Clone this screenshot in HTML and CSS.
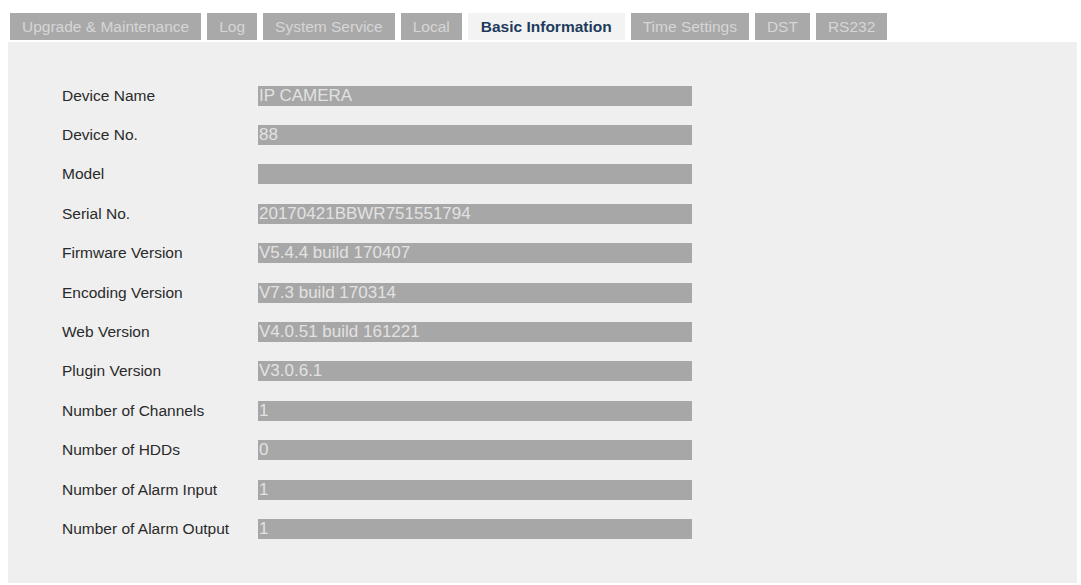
FILE: index.html
```html
<!DOCTYPE html>
<html>
<head>
<meta charset="utf-8">
<link rel="stylesheet" href="styles.css">
</head>
<body>
<div class="tabs">
  <div class="tab">Upgrade &amp; Maintenance</div>
  <div class="tab">Log</div>
  <div class="tab">System Service</div>
  <div class="tab">Local</div>
  <div class="tab active">Basic Information</div>
  <div class="tab">Time Settings</div>
  <div class="tab">DST</div>
  <div class="tab">RS232</div>
</div>
<div class="panel">
  <div class="form">
    <div class="label">Device Name</div><div class="field">IP CAMERA</div>
    <div class="label">Device No.</div><div class="field">88</div>
    <div class="label">Model</div><div class="field"></div>
    <div class="label">Serial No.</div><div class="field">20170421BBWR751551794</div>
    <div class="label">Firmware Version</div><div class="field">V5.4.4 build 170407</div>
    <div class="label">Encoding Version</div><div class="field">V7.3 build 170314</div>
    <div class="label">Web Version</div><div class="field">V4.0.51 build 161221</div>
    <div class="label">Plugin Version</div><div class="field">V3.0.6.1</div>
    <div class="label">Number of Channels</div><div class="field">1</div>
    <div class="label">Number of HDDs</div><div class="field">0</div>
    <div class="label">Number of Alarm Input</div><div class="field">1</div>
    <div class="label">Number of Alarm Output</div><div class="field">1</div>
  </div>
</div>
</body>
</html>
```
FILE: styles.css
```css
html, body {
  margin: 0;
  padding: 0;
  background: #ffffff;
  font-family: "Liberation Sans", Arial, sans-serif;
}
.tabs {
  display: flex;
  gap: 6px;
  padding: 13px 0 0 10px;
}
.tab {
  height: 27px;
  line-height: 27px;
  padding: 0 12px;
  background: #a9a9a9;
  color: #d6d6d6;
  font-size: 15.5px;
  white-space: nowrap;
}
.tab.active {
  background: #f3f3f3;
  color: #1d3b5c;
  font-weight: bold;
  padding: 0 13px;
}
.panel {
  margin: 2px 0 0 8px;
  width: 1069px;
  height: 541px;
  background: #efefef;
  box-sizing: border-box;
  padding: 34px 0 0 54px;
}
.form {
  display: grid;
  grid-template-columns: 196px 434px;
  grid-auto-rows: 39.4px;
  align-items: center;
}
.label {
  font-size: 15.5px;
  color: #2a2a2a;
  white-space: nowrap;
}
.field {
  height: 20px;
  line-height: 20px;
  background: #a7a7a7;
  color: #e2e2e2;
  font-size: 17px;
  padding-left: 1px;
  overflow: hidden;
  white-space: nowrap;
}
```
